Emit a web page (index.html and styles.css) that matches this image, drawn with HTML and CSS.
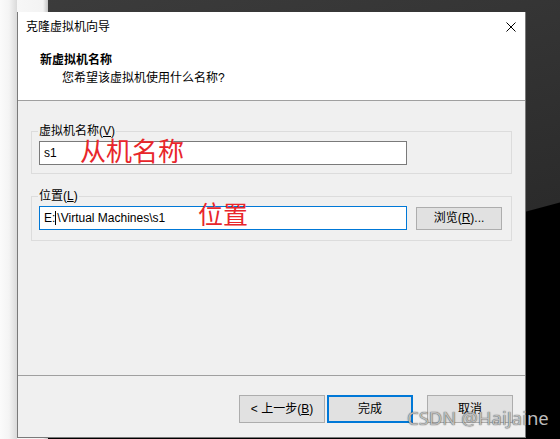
FILE: index.html
```html
<!DOCTYPE html>
<html lang="zh-CN">
<head>
<meta charset="utf-8">
<title>克隆虚拟机向导</title>
<link rel="stylesheet" href="styles.css">
</head>
<body>
  <div class="dialog">
    <div class="header">
      <div class="titlebar">
        <span class="title">克隆虚拟机向导</span>
        <svg class="close" width="10" height="10" viewBox="0 0 10 10" aria-hidden="true">
          <path d="M0.5 0.5 L9.5 9.5 M9.5 0.5 L0.5 9.5" stroke="#000" stroke-width="1" fill="none"/>
        </svg>
      </div>
      <div class="heading">新虚拟机名称</div>
      <div class="subheading">您希望该虚拟机使用什么名称?</div>
    </div>

    <div class="content">
      <fieldset class="group">
        <legend>虚拟机名称(<u>V</u>)</legend>
        <div class="row">
          <div class="field">s1</div>
          <span class="note note-name">从机名称</span>
        </div>
      </fieldset>

      <fieldset class="group group-loc">
        <legend>位置(<u>L</u>)</legend>
        <div class="row">
          <div class="field field-focus">E:<span class="caret"></span>\Virtual Machines\s1</div>
          <button class="btn btn-browse" type="button">浏览(<u>R</u>)...</button>
          <span class="note note-loc">位置</span>
        </div>
      </fieldset>
    </div>

    <div class="footer">
      <button class="btn btn-lg btn-back" type="button">&lt; 上一步(<u>B</u>)</button>
      <button class="btn btn-lg btn-default" type="button">完成</button>
      <button class="btn btn-lg" type="button">取消</button>
    </div>
  </div>

  <div class="watermark">CSDN @HaiJaine</div>
</body>
</html>
```

FILE: styles.css
```css
* {
  box-sizing: border-box;
}

html,
body {
  margin: 0;
}

body {
  position: relative;
  width: 560px;
  height: 439px;
  overflow: hidden;
  padding: 12px 0 0 17px;
  font-family: "Liberation Sans", "Noto Sans CJK SC", sans-serif;
  font-size: 12px;
  color: #000;
  background:
    linear-gradient(to right, #fbfbfb 0, #f4f4f4 9px, #dadada 17px, #f7f7f7 17px, #f3f3f3 43px, #c4c4c4 48px) 0 0 / 48px 100% no-repeat,
    linear-gradient(165deg, #3c3c3c 0, #2b2b2b 340px, #000 341px);
}

.dialog {
  width: 509px;
  height: 426px;
  display: flex;
  flex-direction: column;
  background: #f0f0f0;
  border: 1px solid #7a7a7a;
  border-top: 0;
}

/* header */
.header {
  background: #fff;
  border-bottom: 1px solid #a0a0a0;
  padding-bottom: 14px;
}

.titlebar {
  height: 30px;
  display: flex;
  align-items: center;
  justify-content: space-between;
  padding: 0 9px 0 8px;
}

.title {
  line-height: 16px;
}

.close {
  display: block;
}

.heading {
  margin-top: 10px;
  padding-left: 22px;
  font-weight: 700;
  line-height: 16px;
}

.subheading {
  margin-top: 2px;
  padding-left: 44px;
  line-height: 16px;
}

/* content */
.content {
  flex: 1;
  padding: 22px 13px 0;
}

.group {
  margin: 0;
  min-width: 0;
  border: 1px solid #dcdcdc;
  padding: 2px 9px 8px 7px;
}

.group + .group {
  margin-top: 14px;
}

.group-loc {
  padding-bottom: 10px;
}

legend {
  padding: 0 1px;
  margin-left: -1px;
  line-height: 16px;
}

.row {
  position: relative;
  display: flex;
  align-items: center;
  gap: 9px;
}

.field {
  width: 368px;
  height: 24px;
  background: #fff;
  border: 1px solid #7a7a7a;
  padding: 0 4px;
  line-height: 22px;
  white-space: nowrap;
}

.field-focus {
  border-color: #0078d7;
}

.caret {
  display: inline-block;
  width: 1px;
  height: 14px;
  background: #000;
  vertical-align: -3px;
  margin-right: 1px;
}

.note {
  position: absolute;
  color: #e8262b;
  line-height: 18px;
  white-space: nowrap;
  font-family: "Noto Sans CJK SC", sans-serif;
}

.note-name {
  font-size: 26px;
  left: 41px;
  top: 0;
}

.note-loc {
  font-size: 25px;
  left: 159px;
  top: -2px;
}

/* buttons */
.btn {
  display: flex;
  align-items: center;
  justify-content: center;
  width: 86px;
  height: 23px;
  padding: 0;
  margin: 0;
  background: #e1e1e1;
  border: 1px solid #adadad;
  border-radius: 0;
  font-family: inherit;
  font-size: 12px;
  color: #000;
  line-height: 16px;
}

.btn-lg {
  height: 28px;
}

.btn-back {
  margin-right: 2px;
}

.btn-default {
  border: 2px solid #0078d7;
  margin-right: 14px;
}

/* footer */
.footer {
  height: 62px;
  border-top: 1px solid #a0a0a0;
  padding: 19px 12px 0 0;
  display: flex;
  justify-content: flex-end;
  align-items: flex-start;
}

/* watermark overlay */
.watermark {
  position: absolute;
  left: 407px;
  top: 408px;
  font-family: "Noto Sans", sans-serif;
  font-size: 18.5px;
  line-height: 19px;
  color: #bdbdbd;
  text-shadow: 0 0 1px rgba(0, 0, 0, 0.7), 0 0 2px rgba(0, 0, 0, 0.2);
  white-space: nowrap;
}
```
